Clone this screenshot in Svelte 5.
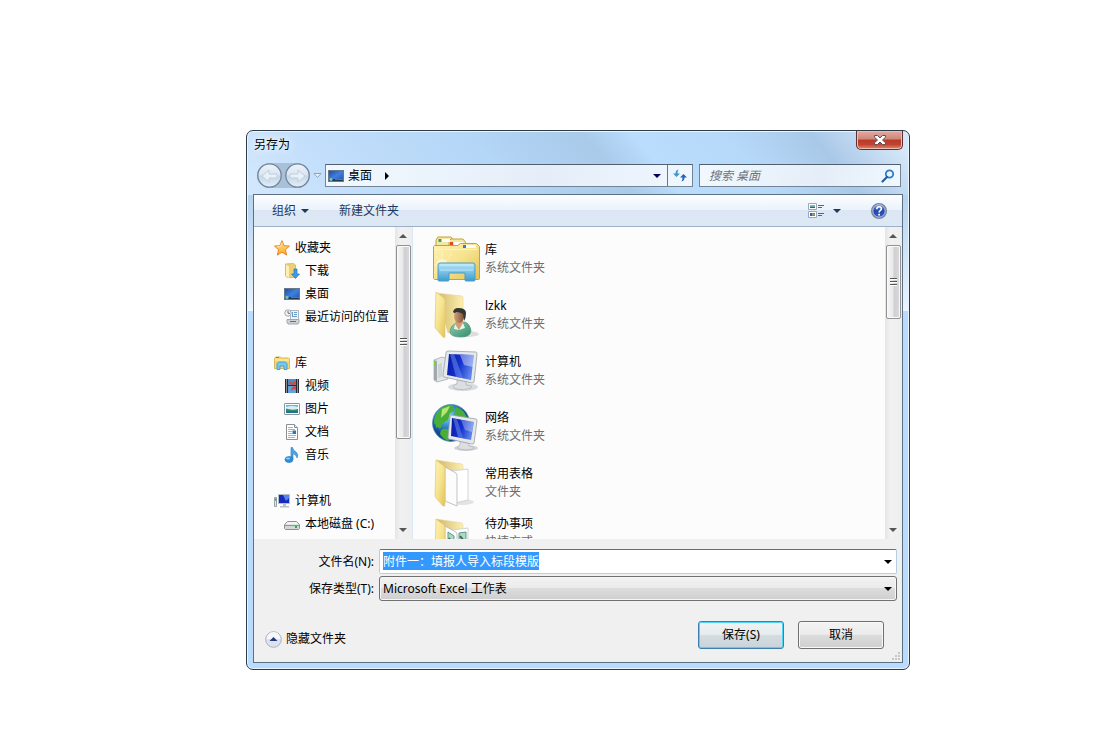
<script lang="ts">
  import { onMount } from 'svelte';

  interface TreeGroup {
    icon: string;
    label: string;
    items: { icon: string; label: string }[];
  }

  interface Entry {
    icon: string;
    name: string;
    kind: string;
    tall?: boolean;
  }

  const tree: TreeGroup[] = [
    {
      icon: 'star',
      label: '收藏夹',
      items: [
        { icon: 'download', label: '下载' },
        { icon: 'desktop', label: '桌面' },
        { icon: 'recent', label: '最近访问的位置' },
      ],
    },
    {
      icon: 'library',
      label: '库',
      items: [
        { icon: 'video', label: '视频' },
        { icon: 'picture', label: '图片' },
        { icon: 'document', label: '文档' },
        { icon: 'music', label: '音乐' },
      ],
    },
    {
      icon: 'computer',
      label: '计算机',
      items: [{ icon: 'disk', label: '本地磁盘 (C:)' }],
    },
  ];

  const entries: Entry[] = [
    { icon: 'library', name: '库', kind: '系统文件夹' },
    { icon: 'user', name: 'lzkk', kind: '系统文件夹' },
    { icon: 'computer', name: '计算机', kind: '系统文件夹' },
    { icon: 'network', name: '网络', kind: '系统文件夹' },
    { icon: 'folder', name: '常用表格', kind: '文件夹' },
    { icon: 'shortcut', name: '待办事项', kind: '快捷方式', tall: true },
  ];

  let fileName = $state('附件一：填报人导入标段模版');
  let fileInput: HTMLInputElement;

  onMount(() => {
    fileInput.focus();
    fileInput.select();
  });
</script>

{#snippet smallIcon(name: string)}
  <svg class="small-icon" viewBox="0 0 16 16" aria-hidden="true">
    {#if name === 'star'}
      <path d="M8 .7l2.100 5 5.400.4-4.100 3.600 1.300 5.400L8 12.200l-4.700 2.900 1.300-5.400L.5 6.100l5.400-.4z" fill="url(#starFill)" stroke="#e3862a" stroke-linejoin="round" />
      <path d="M8 2.800L6.600 6.500l-3.800.4" fill="none" stroke="#ffeaa0" />
    {:else if name === 'download'}
      <path d="M1.500 1l8-.5 2 1.500v12.500h-8l-2-1.500z" fill="#edcf72" stroke="#d8bd68" />
      <path d="M2 1.500l3 2V15l-3-2z" fill="#fff0b1" />
      <path d="M10 6h3v5h2.500l-4 4.500-4-4.500H10z" fill="#3c9be8" stroke="#2276bd" stroke-width=".7" />
    {:else if name === 'desktop'}
      <rect x=".5" y="2.500" width="15" height="11" fill="url(#desktopFill)" stroke="#67798f" />
      <rect x="1" y="11" width="14" height="2" fill="#28384b" />
      <path d="M7 11.500h8" stroke="#63758c" />
      <circle cx="3" cy="11.500" r="1.700" fill="#4fb5dc" />
      <path d="M2 10.500h1.500V12H2z" fill="#e7b73d" />
    {:else if name === 'recent'}
      <path d="M6.500 1.500h8v9h-8z" fill="#eef2f6" stroke="#aeb6be" />
      <path d="M8.500 3v5M10 3.500h3M10 5.500h3M8 7.500h5" stroke="#6d9bc8" />
      <path d="M3 10.500h12v3l-1 1.500H4l-1-1.500z" fill="#cbd1d5" stroke="#a0a8af" />
      <path d="M6 12.500h6" stroke="#5b7387" />
      <circle cx="4" cy="4" r="3.200" fill="#f4f7fa" stroke="#9aa5af" />
      <path d="M4 2v2.300h2" fill="none" stroke="#60717f" />
    {:else if name === 'library'}
      <path d="M.5 3.500l1-1.500h5l1 1h7l1 1v9.500H.5z" fill="#f1d776" stroke="#d9bb58" />
      <path d="M2 2.500h3" stroke="#47ad46" />
      <path d="M1 5h14" stroke="#fff3b4" />
      <path d="M3 14.500v-6l1.500-1.500h7L13 8.500v6h-3V11H6v3.500z" fill="#79c6ec" stroke="#4ba1d3" />
    {:else if name === 'video'}
      <path d="M1 1h14v14H1z" fill="#292c33" />
      <path d="M4 1h8v6H4z" fill="#568bc0" />
      <path d="M4 8h8v7H4z" fill="#62a4d8" />
      <path d="M5 3l3 2 4-2v3l-3 1-4-1zM8 9l4-1v4l-2-1-3 2z" fill="#d84b38" />
      <path d="M2.500 1.500v14M13.500 1.500v14" stroke="#e7edf0" stroke-dasharray="1 1" />
    {:else if name === 'picture'}
      <rect x=".5" y="2.500" width="15" height="11" rx=".5" fill="#fff" stroke="#8b949d" />
      <path d="M2 4h12v8H2z" fill="#63b5e7" />
      <path d="M2 6q5-2 12 0v3H2z" fill="#d8eff8" />
      <path d="M2 7.500q5 2 12 .5v4H2z" fill="#338e6c" />
      <path d="M2 10h12v2H2z" fill="#256f92" />
    {:else if name === 'document'}
      <path d="M2.500.5h8l3 3v12h-11z" fill="#fff" stroke="#8b9094" />
      <path d="M10.500.5v3h3" fill="#e3e7ec" stroke="#8b9094" />
      <path d="M4 3.500h5M4 5.500h7M4 7.500h4M4 9.500h4M4 11.500h8M4 13.500h7" stroke="#a3b2d0" />
      <path d="M8.500 6.500H12V10H8.500z" fill="#2676bd" />
    {:else if name === 'music'}
      <path d="M7 12.500V.5h1.500q.5 3 3.500 4.500 3 2.500 1 6-.3-3-4-4.500v6z" fill="#4fa3e2" stroke="#2b7dc0" stroke-width=".6" />
      <ellipse cx="5" cy="12.500" rx="4" ry="3" fill="#268fe1" stroke="#1d70ae" stroke-width=".6" />
      <ellipse cx="4" cy="11.500" rx="2" ry="1" fill="#8cd0fa" />
    {:else if name === 'computer'}
      <path d="M.5 4.500h2v9h-2z" fill="#dbe1e5" stroke="#9aa4ac" />
      <path d="M1 6.500h1.500" stroke="#30a748" stroke-width="2" />
      <path d="M4.500 1.500h11v9h-11z" fill="#1829bd" stroke="#b7c0ca" />
      <path d="M9 2h6v3l-3 3z" fill="#5686ec" />
      <path d="M9 11h3v2h3v1.500H6V13h3z" fill="#b9c0c6" />
    {:else if name === 'disk'}
      <path d="M3.500 5.500h9l3 3v4l-1 1h-13l-1-1v-4z" fill="#d4d7d9" stroke="#8d9296" />
      <path d="M3.500 6h9l2 2.500h-13z" fill="#f3f4f4" />
      <path d="M1 9.500h14" stroke="#8f9498" />
      <rect x="11" y="10" width="2" height="2" fill="#18ba35" />
    {/if}
  </svg>
{/snippet}

{#snippet largeIcon(name: string)}
  <svg class="large-icon" viewBox="0 0 48 48" aria-hidden="true">
    {#if name === 'library'}
      <path d="M4 11V5l2-3h13l3 4 2 5z" fill="#f5e6a2" stroke="#c4a13e" />
      <path d="M17 10V6l2-2h12l3 4v3z" fill="#f5e6a2" stroke="#c4a13e" />
      <path d="M9 4h9v3H9zM22 7h9v3h-9z" fill="#fff" />
      <path d="M6.500 4h3v3h-3z" fill="#39a44c" />
      <path d="M18 7h3v3h-3z" fill="#df4a20" />
      <path d="M1.500 11.500l1-1h23l3-2h16l3 3v32q0 1-1 1h-44l-1-1z" fill="url(#folderFront)" stroke="#c6a03c" />
      <path d="M34 10h10v3H34z" fill="#fff" />
      <path d="M31 10h3v3h-3z" fill="#2584d4" />
      <path d="M2.500 14.500h43" stroke="#fff4b6" />
      <path d="M10 17v24M2 30h22M4 21l15 18M2 38l18-19" stroke="#fffbd8" opacity=".55" />
      <circle cx="10" cy="30" r="6" fill="#fffbd8" opacity=".65" />
      <path d="M6 45V30q0-2 2-2h33q2 0 2 2v15q0 1-1 1h-8q-1 0-1-1v-7H17v7q0 1-1 1H7q-1 0-1-1z" fill="url(#libraryStand)" stroke="#4b9cc8" />
      <path d="M8 30h33M8 35h33" stroke="#dcf5ff" opacity=".7" />
    {:else if name === 'user'}
      <ellipse cx="35" cy="43" rx="12" ry="3" fill="#b9bfbd" opacity=".5" />
      <path d="M4 2l26 3q1 0 1 2v31l-15 4z" fill="url(#folderBack)" stroke="#e6d59a" stroke-width=".6" />
      <path d="M4 1l8 6q1 1 1 4v34q0 3-2 1l-7-8q-1-1-1-3z" fill="url(#folderFront)" stroke="#e0c976" stroke-width=".7" />
      <path d="M18 42q0-8 7-10l8-1q5 2 6 9-1 6-10 6-9 0-11-4z" fill="url(#shirt)" stroke="#4d9179" stroke-width=".7" />
      <path d="M24 29l-1 4 4 6 4-6v-4z" fill="#d39c75" />
      <path d="M23 33l4 6-5-1zM31 32l-4 7 6-2z" fill="#e8f5e7" />
      <ellipse cx="27" cy="25" rx="5" ry="7" fill="url(#skin)" />
      <path d="M21 21q1-4 5-4 8 0 8 5 0 5-2 8l-1-7q-3-2-7-2-1 2-3 0z" fill="#303634" />
    {:else if name === 'computer'}
      <ellipse cx="31" cy="40" rx="15" ry="4" fill="#a8aaad" opacity=".4" />
      <path d="M2 13l8-3 6 2v20l-11 3-3-2z" fill="#e3e6e8" stroke="#a6acb1" stroke-width=".8" />
      <path d="M2 13l3 1v20l-3-1z" fill="#a2a9ae" />
      <path d="M3 15v4" stroke="#66dc38" stroke-width="2" />
      <path d="M7 17v14M9 16v14" stroke="#b8c0c5" />
      <path d="M25 32l9 2v4q8 1 5 3-7 3-15 1-6-3 1-5z" fill="#dcdee1" stroke="#aaafb4" stroke-width=".7" />
      <path d="M16 4l28 1q1 0 1 2l-3 28q0 1-2 1l-28-6q-1 0-1-2l3-22q0-2 2-2z" fill="#e6e9ec" stroke="#999fa6" stroke-width=".8" />
      <path d="M17 7l25 1-3 25-24-5z" fill="url(#screen)" />
      <path d="M18 7h4l9 24-7-1z" fill="#6f93ec" opacity=".5" />
      <path d="M28 8h14l-1 12-9-2z" fill="#fff" opacity=".4" />
    {:else if name === 'network'}
      <circle cx="19" cy="20" r="18.500" fill="url(#globe)" stroke="#4f88bb" stroke-width=".7" />
      <path d="M8 6q6-5 12-4l3 5-5 3-2 7-5 3-3 6-6-6q0-8 6-14zM24 4q7 2 11 10l-6 2-4-3-3 1 1-6zM9 27q5-3 10 1l2 7-5 3q-5-2-8-7zM3 16l4 7-3 2z" fill="#48ae37" />
      <path d="M10 6l8-3-3 6-6 6z" fill="#b8e376" />
      <ellipse cx="34" cy="45" rx="12" ry="3" fill="#a8aaad" opacity=".5" />
      <path d="M28 38l9 2v3q7 1 4 3-7 2-14 0-3-2 1-4z" fill="#dcdee1" stroke="#aaafb4" stroke-width=".7" />
      <path d="M19 12l25 4q1 0 1 2l-3 22q0 1-2 1L17 36q-1 0-1-2l2-20q0-2 1-2z" fill="#e6e9ec" stroke="#999fa6" stroke-width=".8" />
      <path d="M20 15l22 4-3 18-20-4z" fill="url(#screen)" />
      <path d="M21 15l4 1 6 19-5-1z" fill="#6f93ec" opacity=".5" />
      <path d="M29 17l13 2-2 10-7-2z" fill="#fff" opacity=".3" />
    {:else}
      <ellipse cx="30" cy="43" rx="12" ry="3" fill="#aaa" opacity=".3" />
      <path d="M4 1l26 4q1 1 1 3v31l-16 4z" fill="url(#folderBack)" stroke="#e6d59a" stroke-width=".6" />
      <path d="M20 12l16-2v31l-13 3z" fill="#fff" stroke="#d4d4d4" />
      <path d="M13 8l11 6q1 1 1 3v30l-12-5z" fill="#fcfcfc" stroke="#b5b5b5" stroke-width=".8" />
      {#if name === 'shortcut'}
        <path d="M16 14l6 4v12l-6-3zM27 15l7-1v10l-7 2z" fill="#acd8c7" stroke="#5e9c83" />
        <path d="M17 20l4 8M28 18l4 5" stroke="#4b5d58" stroke-width="2" />
      {/if}
      <path d="M4 1l8 6q1 1 1 4v34q0 3-2 2l-7-8q-1-1-1-3z" fill="url(#folderFront)" stroke="#e0c976" stroke-width=".7" />
    {/if}
  </svg>
{/snippet}

{#snippet scrollArrow(down: boolean)}
  <svg class="scroll-arrow" class:down viewBox="0 0 8 5" aria-hidden="true"><path d="M4 0l4 4H0z" fill="#555" /></svg>
{/snippet}

{#snippet scrollbar(kind: string)}
  <div class="scrollbar {kind}">
    {@render scrollArrow(false)}
    <div class="thumb"><i></i><i></i><i></i></div>
    {@render scrollArrow(true)}
  </div>
{/snippet}

<svg class="defs" aria-hidden="true">
  <defs>
    <linearGradient id="starFill" x2="0" y2="1"><stop stop-color="#ffe27c" /><stop offset="1" stop-color="#fba834" /></linearGradient>
    <linearGradient id="desktopFill" x2="1" y2="1"><stop stop-color="#1c4ba6" /><stop offset=".5" stop-color="#3f80dc" /><stop offset="1" stop-color="#1d50aa" /></linearGradient>
    <linearGradient id="folderFront" x2="1" y2="1"><stop stop-color="#fff3b5" /><stop offset=".5" stop-color="#f6e38f" /><stop offset="1" stop-color="#e2c253" /></linearGradient>
    <linearGradient id="folderBack" x2="1"><stop stop-color="#cfb668" /><stop offset="1" stop-color="#fdf0b0" /></linearGradient>
    <linearGradient id="libraryStand" x2="0" y2="1"><stop stop-color="#b9e7f8" /><stop offset="1" stop-color="#3c9bd0" /></linearGradient>
    <linearGradient id="shirt" x2="1" y2="1"><stop stop-color="#93cfad" /><stop offset="1" stop-color="#328c70" /></linearGradient>
    <linearGradient id="skin"><stop stop-color="#d3a17c" /><stop offset="1" stop-color="#7d523c" /></linearGradient>
    <linearGradient id="screen" x2="1" y2=".3"><stop stop-color="#0718a2" /><stop offset=".55" stop-color="#1531cf" /><stop offset="1" stop-color="#5c83ea" /></linearGradient>
    <radialGradient id="globe" cx=".4" cy=".3"><stop stop-color="#9cdcf7" /><stop offset=".5" stop-color="#3c95d5" /><stop offset="1" stop-color="#164b93" /></radialGradient>
    <linearGradient id="navFill" x2="0" y2="1"><stop stop-color="#edf4fa" /><stop offset=".48" stop-color="#d9e5f0" /><stop offset=".52" stop-color="#c6d7e6" /><stop offset="1" stop-color="#e3eff9" /></linearGradient>
    <linearGradient id="helpFill" x2="0" y2="1"><stop stop-color="#7590e0" /><stop offset=".5" stop-color="#2146ad" /><stop offset="1" stop-color="#3c63ca" /></linearGradient>
  </defs>
</svg>

<main>
  <section class="dialog" aria-label="另存为">
    <header class="titlebar">
      <h1>另存为</h1>
      <button class="close" aria-label="关闭">
        <svg viewBox="0 0 14 12"><path d="M1.500 1.500h3L7 4l2.500-2.500h3v1.700L9.500 6l3 2.800v1.700h-3L7 8l-2.500 2.500h-3V8.800l3-2.800-3-2.800z" fill="#fff" stroke="#5e5058" /></svg>
      </button>
    </header>

    <nav class="navbar">
      <div class="history">
        <button class="round" aria-label="后退">
          <svg viewBox="0 0 25 25"><circle cx="12.500" cy="12.500" r="11.700" fill="url(#navFill)" stroke="#71849a" stroke-width="1.300" /><path d="M5 13l7-6v4h8v4h-8v4z" fill="#e8f1f9" stroke="#c0cfdd" /></svg>
        </button>
        <button class="round" aria-label="前进">
          <svg viewBox="0 0 25 25"><circle cx="12.500" cy="12.500" r="11.700" fill="url(#navFill)" stroke="#71849a" stroke-width="1.300" /><path d="M20 13l-7-6v4H5v4h8v4z" fill="#e8f1f9" stroke="#c0cfdd" /></svg>
        </button>
      </div>
      <button class="recent" aria-label="最近浏览">
        <svg viewBox="0 0 9 6"><path d="M1 .5h7l-3.500 4z" fill="#e7f2fc" stroke="#8ca6bf" /></svg>
      </button>
      <div class="address">
        {@render smallIcon('desktop')}
        <a href="#desktop">桌面</a>
        <svg class="crumb" viewBox="0 0 4 8"><path d="M0 0l4 4-4 4z" /></svg>
        <button class="history-drop" aria-label="以前的位置">
          <svg viewBox="0 0 8 4"><path d="M0 0h8L4 4z" fill="#000060" /></svg>
        </button>
        <button class="refresh" aria-label="刷新">
          <svg viewBox="0 0 14 13"><path d="M5.500.5q-3 .5-3 4H0L3.500 8 7 4.500H4.500q0-2.500 1-4z" fill="#3f94d4" /><path d="M8.500 12.500q3-.5 3-4H14L10.500 5 7 8.500h2.500q0 2.500-1 4z" fill="#2863b4" /></svg>
        </button>
      </div>
      <div class="search">
        <input type="search" placeholder="搜索 桌面" aria-label="搜索 桌面" />
        <svg viewBox="0 0 14 14"><circle cx="8.500" cy="5" r="3.700" fill="#e6f4ff" stroke="#347bc0" stroke-width="1.800" /><path d="M6 8l-4.500 4.500" stroke="#285c9d" stroke-width="2.200" stroke-linecap="round" /></svg>
      </div>
    </nav>

    <div class="client">
      <div class="toolbar">
        <button class="organize">组织 <svg viewBox="0 0 8 4"><path d="M0 0h8L4 4z" /></svg></button>
        <button class="new-folder">新建文件夹</button>
        <button class="views" aria-label="更改视图">
          <svg class="views-icon" viewBox="0 0 17 16">
            <path d="M.5.500h8v6h-8zM.5 8.500h8v6h-8z" fill="#fff" stroke="#9ba8b5" />
            <path d="M2 2h5v1.500H2z" fill="#6bbde5" /><path d="M2 3.500h5V5H2z" fill="#226c65" />
            <path d="M2 10h2.500v3H2z" fill="#2860c0" /><path d="M4.500 10H7v1.500H4.500z" fill="#e94b30" /><path d="M4.500 11.500H7V13H4.500z" fill="#38a744" />
            <path d="M10 2.500h6M10 4.500h4M10 10.500h6M10 12.500h4" stroke="#50677f" />
          </svg>
          <svg viewBox="0 0 8 4"><path d="M0 0h8L4 4z" /></svg>
        </button>
        <button class="help" aria-label="帮助">
          <svg viewBox="0 0 16 16"><circle cx="8" cy="8" r="7.300" fill="url(#helpFill)" stroke="#7d8498" stroke-width="1.400" /><circle cx="8" cy="8" r="6.200" fill="none" stroke="#dce4f6" stroke-width=".8" /><path d="M5.800 6.200q0-2.400 2.300-2.400t2.300 2q0 1.100-1.200 1.800T8.100 9.500" fill="none" stroke="#fff" stroke-width="1.600" /><path d="M7.200 10.800h1.800v1.700H7.200z" fill="#fff" /></svg>
        </button>
      </div>

      <div class="panes">
        <aside>
          <div class="tree">
            {#each tree as group}
              <ul>
                <li>{@render smallIcon(group.icon)}<span>{group.label}</span></li>
                {#each group.items as item}
                  <li class="child">{@render smallIcon(item.icon)}<span>{item.label}</span></li>
                {/each}
              </ul>
            {/each}
          </div>
          {@render scrollbar('tree-scroll')}
        </aside>
        <div class="files">
          <ul>
            {#each entries as entry}
              <li class:tall={entry.tall}>
                {@render largeIcon(entry.icon)}
                <div class="entry-text">
                  <span>{entry.name}</span>
                  <span class="kind">{entry.kind}</span>
                </div>
              </li>
            {/each}
          </ul>
          {@render scrollbar('file-scroll')}
        </div>
      </div>

      <form onsubmit={(e) => e.preventDefault()}>
        <div class="fields">
          <label for="file-name">文件名(N):</label>
          <div class="combo">
            <input id="file-name" type="text" bind:this={fileInput} bind:value={fileName} autocomplete="off" />
            <svg viewBox="0 0 8 4"><path d="M0 0h8L4 4z" /></svg>
          </div>
          <label for="file-type">保存类型(T):</label>
          <div class="combo">
            <select id="file-type">
              <option>Microsoft Excel 工作表</option>
            </select>
            <svg viewBox="0 0 8 4"><path d="M0 0h8L4 4z" /></svg>
          </div>
        </div>
        <div class="actions">
          <button type="button" class="toggle">
            <svg viewBox="0 0 17 17"><circle cx="8.500" cy="8.500" r="7.800" fill="#dde2ec" stroke="#a9b0c8" /><path d="M1.500 8a7 7 0 0 1 14 0z" fill="#f5f7fa" /><path d="M8.500 6l4 4h-8z" fill="#203b78" /></svg>
            隐藏文件夹
          </button>
          <button type="submit" class="push default">保存(S)</button>
          <button type="button" class="push">取消</button>
        </div>
        <svg class="grip" viewBox="0 0 9 9" aria-hidden="true"><path d="M7 0h2v2H7zM4 3h2v2H4zM7 3h2v2H7zM1 6h2v2H1zM4 6h2v2H4zM7 6h2v2H7z" fill="#c8c8c8" /></svg>
      </form>
    </div>
  </section>
</main>

<style>
  :global(body) {
    margin: 0;
    background: #fff;
  }

  main,
  button,
  input,
  select {
    font: 12px/18px "Noto Sans", "Noto Sans CJK SC", sans-serif;
    color: #000;
  }

  main {
    padding: 130px 209px 69px 246px;
  }

  button {
    padding: 0;
    border: 0;
    background: none;
  }

  ul {
    margin: 0;
    padding: 0;
    list-style: none;
  }

  svg {
    display: block;
    flex: none;
  }

  .defs {
    position: absolute;
    width: 0;
    height: 0;
  }

  .dialog {
    border: 1px solid #2d3b49;
    border-radius: 7px;
    box-shadow: inset 0 0 0 1px #e9f5ff;
    background:
      linear-gradient(50deg, #d4e8fc 0, #c3dffb 14%, #b4d6f7 38%, #a9cae9 54%, #badcfd 61%, #b7d9f9 74%, #a9c8e8 86%, #d5e7f8 97%) top / 100% 64px no-repeat,
      linear-gradient(#b6d3ef 64px, #e5f1fc 170px, #eff7ff 180px, #b9dbfd 180px);
  }

  .titlebar {
    display: flex;
    justify-content: space-between;
    height: 32px;
    padding: 0 6px 0 7px;
  }

  h1 {
    margin: 0;
    padding-top: 5px;
    font-size: 12px;
    font-weight: 400;
    text-shadow: 0 0 8px #fff, 0 0 8px #fff;
  }

  .close {
    display: grid;
    place-items: center;
    width: 47px;
    height: 19px;
    border: 1px solid #5a2f35;
    border-top: 0;
    border-radius: 0 0 5px 5px;
    background: linear-gradient(#e3aaa1 0, #d08578 45%, #b63b28 50%, #c24430 75%, #e08a6b 100%);
    box-shadow: inset 0 0 0 1px #eebdb2;
  }

  .close svg {
    width: 14px;
    height: 12px;
  }

  .navbar {
    display: flex;
    align-items: center;
    gap: 3px;
    margin-bottom: 6px;
    padding: 0 8px 0 10px;
  }

  .history {
    display: flex;
    gap: 3px;
    border-radius: 13px;
    background: #a9c1d8;
  }

  .round svg {
    width: 25px;
    height: 25px;
  }

  .recent svg {
    width: 9px;
    height: 6px;
  }

  .address,
  .search {
    display: flex;
    align-items: center;
    box-sizing: border-box;
    height: 23px;
    border: 1px solid #748496;
    border-top-color: #525f6e;
    background: linear-gradient(100deg, #f1f8ff, #e5eef8 60%, #eff7ff);
  }

  .address {
    flex: 1;
    padding-left: 2px;
  }

  .address a {
    margin: 0 13px 0 4px;
    color: #000;
    text-decoration: none;
  }

  .crumb {
    width: 4px;
    height: 8px;
  }

  .history-drop {
    margin-left: auto;
    padding: 0 6px;
  }

  .history-drop svg,
  .organize svg,
  .views svg:last-child {
    width: 8px;
    height: 4px;
  }

  .refresh {
    display: grid;
    place-items: center;
    width: 25px;
    height: 21px;
    border-left: 1px solid #66788c;
  }

  .refresh svg {
    width: 14px;
    height: 13px;
  }

  .search {
    width: 202px;
    margin-left: 3px;
    padding: 0 5px 0 9px;
  }

  .search input {
    flex: 1;
    min-width: 0;
    padding: 0;
    border: 0;
    outline: 0;
    background: none;
  }

  .search input::placeholder {
    color: #6d747b;
    font-style: italic;
  }

  .search svg {
    width: 14px;
    height: 14px;
  }

  .client {
    margin: 0 6px 6px;
    border: 1px solid #5d6f82;
    background: #f0f0f0;
  }

  .toolbar {
    display: flex;
    align-items: center;
    height: 31px;
    padding: 0 15px 0 18px;
    border-bottom: 1px solid #a0afc8;
    background: linear-gradient(#fdfeff 0, #eaf2fb 48%, #dce6f4 50%, #dde8f5 100%);
  }

  .toolbar button {
    color: #1e395b;
  }

  .organize,
  .views {
    display: flex;
    align-items: center;
    gap: 5px;
  }

  .organize svg,
  .views svg:last-child {
    fill: #1e395b;
  }

  .new-folder {
    margin-left: 30px;
  }

  .views {
    gap: 8px;
    margin-left: auto;
  }

  .views-icon {
    width: 17px;
    height: 16px;
  }

  .help {
    margin-left: 30px;
  }

  .help svg {
    width: 16px;
    height: 16px;
  }

  .panes {
    display: flex;
    height: 312px;
    background: #fcfcfc;
  }

  aside {
    display: flex;
    width: 158px;
    border-right: 1px solid #d9e8f6;
    overflow: hidden;
  }

  .tree {
    flex: 1;
    min-width: 0;
    padding: 9px 0 0 20px;
  }

  .tree ul {
    margin-bottom: 23px;
  }

  .tree li {
    display: flex;
    align-items: center;
    gap: 5px;
    height: 23px;
    white-space: nowrap;
  }

  .tree .child {
    padding-left: 10px;
  }

  .small-icon {
    width: 16px;
    height: 16px;
  }

  .files {
    display: flex;
    flex: 1;
    min-width: 0;
    overflow: hidden;
  }

  .files ul {
    flex: 1;
    padding: 4px 0 0 19px;
  }

  .files li {
    display: flex;
    align-items: center;
    gap: 5px;
    height: 56px;
  }

  .files .tall {
    height: 62px;
  }

  .tall .entry-text {
    padding-bottom: 18px;
  }

  .large-icon {
    width: 48px;
    height: 48px;
  }

  .entry-text {
    display: grid;
  }

  .kind {
    color: #6d6d6d;
  }

  .scrollbar {
    display: flex;
    flex-direction: column;
    align-items: center;
    box-sizing: border-box;
    width: 17px;
    padding: 7px 1px 7px 0;
    background: linear-gradient(90deg, #e5e5e5, #f1f1f1 30%, #eee);
  }

  .thumb {
    display: flex;
    flex-direction: column;
    align-items: center;
    justify-content: center;
    gap: 1px;
    box-sizing: border-box;
    width: 15px;
    margin: 6px 0 auto;
    border: 1px solid #929292;
    border-radius: 2px;
    background: linear-gradient(90deg, #f6f6f6, #e9e9eb 45%, #cfcfd3 55%, #dadadd);
    box-shadow: inset 0 0 0 1px #fafafa;
  }

  .thumb i {
    width: 7px;
    height: 1px;
    border-bottom: 1px solid #fff;
    background: #555;
  }

  .tree-scroll .thumb {
    height: 194px;
  }

  .file-scroll .thumb {
    height: 74px;
  }

  .scroll-arrow {
    width: 8px;
    height: 5px;
  }

  .scroll-arrow.down {
    transform: rotate(180deg);
  }

  form {
    position: relative;
    padding: 10px 5px 13px 11px;
  }

  .fields {
    display: grid;
    grid-template-columns: 109px 1fr;
    gap: 2px 5px;
    align-items: center;
  }

  label {
    text-align: right;
  }

  .combo {
    position: relative;
  }

  .combo input,
  .combo select {
    display: block;
    box-sizing: border-box;
    width: 100%;
    height: 25px;
    padding: 0 20px 2px 3px;
    border: 1px solid #b5cfe7;
    border-top-color: #3d7bad;
    border-radius: 2px;
    outline: 0;
    background: #fff;
  }

  .combo input {
    caret-color: transparent;
  }

  .combo input::selection {
    background: #39f;
    color: #fff;
  }

  .combo select {
    appearance: none;
    padding-bottom: 0;
    border-color: #707070;
    border-radius: 3px;
    background: linear-gradient(#f2f2f2 0, #ebebeb 49%, #dcdcdc 50%, #cfcfcf 100%);
    box-shadow: inset 0 0 0 1px #f6f6f6;
  }

  .combo svg {
    position: absolute;
    top: 11px;
    right: 5px;
    width: 8px;
    height: 4px;
    pointer-events: none;
  }

  .actions {
    display: flex;
    align-items: center;
    gap: 14px;
    margin-top: 20px;
    padding-right: 13px;
  }

  .toggle {
    display: flex;
    align-items: center;
    gap: 4px;
    margin: 8px auto 0 0;
  }

  .toggle svg {
    width: 17px;
    height: 17px;
  }

  .push {
    width: 86px;
    height: 28px;
    border: 1px solid #707070;
    border-radius: 3px;
    background: linear-gradient(#f3f3f3 0, #ebebeb 48%, #dcdcdc 50%, #cfcfcf 100%);
    box-shadow: inset 0 0 0 1px #f8f8f8;
  }

  .default {
    border-color: #3c7fb1;
    background: linear-gradient(#f0f3f4 0, #e6ebed 48%, #d5dde1 50%, #c9d3d9 100%);
    box-shadow: inset 0 0 0 1px #4fd4f8;
  }

  .grip {
    position: absolute;
    right: 2px;
    bottom: 1px;
    width: 9px;
    height: 9px;
  }
</style>
